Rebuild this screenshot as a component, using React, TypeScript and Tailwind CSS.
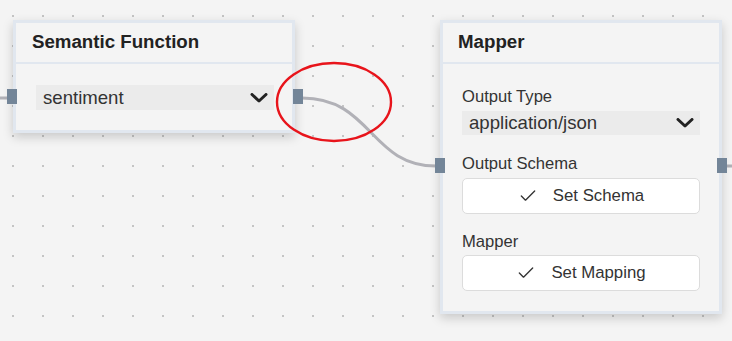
import { Check } from "lucide-react";

function Chevron() {
  return (
    <svg width="18" height="10" viewBox="0 0 18 10" className="shrink-0">
      <path d="M2 1.5 9 8l7-6.5" fill="none" stroke="#222" strokeWidth="3" strokeLinecap="round" strokeLinejoin="round" />
    </svg>
  );
}

function Select({ value }: { value: string }) {
  return (
    <div className="flex h-[25px] items-center justify-between bg-[#ebebeb] pl-[7px] pr-[6px] text-[18.6px] text-[#333]">
      <span>{value}</span>
      <Chevron />
    </div>
  );
}

function SetButton({ label }: { label: string }) {
  return (
    <button className="flex h-[36px] w-full items-center justify-center gap-[15px] rounded-[5px] border border-[#dcdcdc] bg-white text-[16.8px] text-[#333]">
      <Check size={20} strokeWidth={1.6} className="text-[#333]" />
      <span>{label}</span>
    </button>
  );
}

export default function App() {
  return (
    <div
      className="relative h-[341px] w-[732px] overflow-hidden bg-[#f4f4f4] bg-[radial-gradient(circle,#c4c4c4_1.1px,transparent_1.3px)] bg-[size:30px_30px] bg-[position:-2px_1px]"
      style={{ fontFamily: '"Liberation Sans", Arial, sans-serif' }}
    >
      {/* edges */}
      <svg className="absolute inset-0" width="732" height="341">
        <path d="M0 98 H8" stroke="#b1b1b7" strokeWidth="3" fill="none" />
        <path d="M302 98 C 372 98, 370 166, 436 166" stroke="#b1b1b7" strokeWidth="3" fill="none" />
        <path d="M726 166 H732" stroke="#b1b1b7" strokeWidth="3" fill="none" />
      </svg>

      {/* Semantic Function node */}
      <div className="absolute left-[13px] top-[20px] w-[282px] border-[3px] border-[#e1e7ef] bg-[#f4f4f4] shadow-[0_4px_10px_rgba(0,0,0,0.18)]">
        <div className="flex h-[41px] items-center border-b-[2px] border-[#e1e7ef] pl-[16px] text-[18.7px] font-bold text-[#222]">
          Semantic Function
        </div>
        <div className="relative pb-[20px] pl-[20px] pr-[18px] pt-[21px]">
          <Select value="sentiment" />
          <div className="absolute left-[-9px] top-[25px] h-[15px] w-[10px] bg-[#738598]" />
          <div className="absolute right-[-11px] top-[25px] h-[15px] w-[10px] bg-[#738598]" />
        </div>
      </div>

      {/* Mapper node */}
      <div className="absolute left-[440px] top-[20px] w-[282px] border-[3px] border-[#e1e7ef] bg-[#f4f4f4] shadow-[0_4px_10px_rgba(0,0,0,0.18)]">
        <div className="flex h-[41px] items-center border-b-[2px] border-[#e1e7ef] pl-[15px] text-[18.7px] font-bold text-[#222]">
          Mapper
        </div>
        <div className="relative flex flex-col px-[19px] pb-[20px] pt-[23px] text-[16.6px] text-[#333]">
          <div className="mb-[4px] leading-[20px]">Output Type</div>
          <div className="flex h-[24px] items-center justify-between bg-[#ebebeb] pl-[7px] pr-[6px] text-[18.6px] text-[#333]">
            <span>application/json</span>
            <Chevron />
          </div>
          <div className="mb-[4px] mt-[19px] leading-[20px]">Output Schema</div>
          <SetButton label="Set Schema" />
          <div className="mb-[3px] mt-[18px] leading-[20px]">Mapper</div>
          <SetButton label="Set Mapping" />
          <div className="absolute left-[-8px] top-[94px] h-[15px] w-[10px] bg-[#738598]" />
          <div className="absolute right-[-8px] top-[94px] h-[15px] w-[10px] bg-[#738598]" />
        </div>
      </div>

      {/* annotation */}
      <svg className="pointer-events-none absolute inset-0" width="732" height="341">
        <ellipse cx="334" cy="102" rx="57" ry="39" fill="none" stroke="#e8141b" strokeWidth="2.4" />
      </svg>
    </div>
  );
}
